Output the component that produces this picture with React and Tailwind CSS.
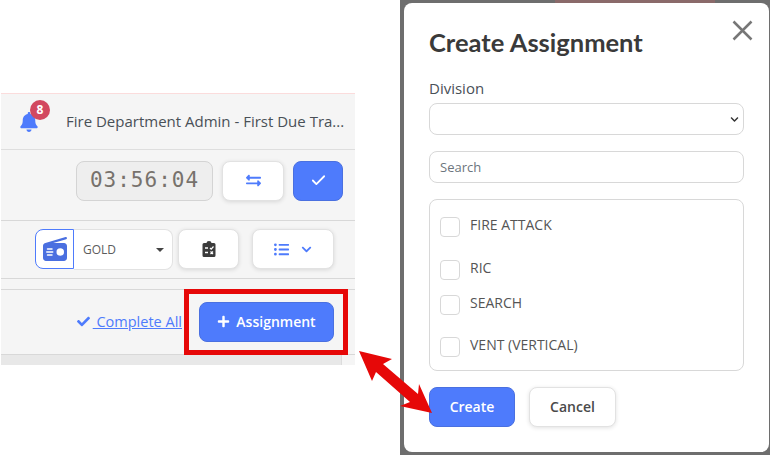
import React from 'react';
import { FaBell, FaCheck, FaChevronDown, FaExchangeAlt, FaListUl, FaPlus } from 'react-icons/fa';
import { FaRadio } from 'react-icons/fa6';
import { Check } from 'lucide-react';

const ClipboardIcon = () => (
  <svg width="14" height="16" viewBox="0 0 14 16">
    <path d="M2 2h2.5a2.5 2 0 0 1 5 0H12a1.5 1.5 0 0 1 1.5 1.5V14.500a1.500 1.500 0 0 1-1.500 1.500H2a1.500 1.500 0 0 1-1.500-1.500V3.500A1.500 1.500 0 0 1 2 2z" fill="#3b3b3b" />
    <path d="M3 7h3M3 11.500h3" stroke="#fff" strokeWidth="1.300" />
    <path d="M8 7l1.200 1.200L11.500 5.500M8.500 10.500l2.500 2.500M11 10.500l-2.500 2.500" stroke="#fff" strokeWidth="1.200" fill="none" />
  </svg>
);

const whiteBtn = 'flex items-center justify-center bg-white rounded-lg border border-[#e2e2e2] shadow-[0_1px_4px_rgba(0,0,0,0.12)]';

const assignments = [
  { name: 'FIRE ATTACK', box: 'mt-[17px]', label: '-mt-[2px]' },
  { name: 'RIC', box: 'mt-[23px]', label: '-mt-[2px]' },
  { name: 'SEARCH', box: 'mt-[15px]', label: '-mt-[2px]' },
  { name: 'VENT (VERTICAL)', box: 'mt-[22px]', label: '-mt-[2px]' },
];

export default function App() {
  return (
    <div className="relative w-[770px] h-[455px] overflow-hidden bg-white flex font-['Open_Sans',sans-serif]">
      {/* left crop of the page */}
      <div className="w-[354px] ml-px mt-[93px] h-[272px] bg-[#f5f5f5] border-t border-[#fbdcdc] flex flex-col text-[#495057]">
        <div className="h-[56px] border-b border-[#dedede] flex items-center">
          <div className="relative ml-[18px] mt-[1px] text-[#4e7bfc]">
            <FaBell size={20} />
            <span className="absolute -top-[12px] left-[11px] w-[20px] h-[20px] rounded-full bg-[#d2485f] text-white text-[12px] font-bold flex items-center justify-center">8</span>
          </div>
          <span className="ml-[27px] text-[15px] whitespace-nowrap">Fire Department Admin - First Due Tra...</span>
        </div>
        <div className="h-[71px] border-b border-[#d8d8d8] flex items-center justify-end pr-[12px] pb-[9px] gap-[9px]">
          <div className="w-[137px] h-[40px] rounded-lg bg-[#eeeeee] border border-[#d4d4d4] flex items-center justify-center text-[#77726c] text-[21px] tracking-[1px] font-['DejaVu_Sans_Mono',monospace]">03:56:04</div>
          <div className={`${whiteBtn} w-[62px] h-[40px] text-[#4e7bfc]`}><FaExchangeAlt size={15} className="-scale-x-100" /></div>
          <div className="w-[50px] h-[40px] rounded-lg bg-[#4e7bfc] border border-[#4a70e0] flex items-center justify-center text-white"><Check size={17} strokeWidth={2.5} /></div>
        </div>
        <div className="h-[58px] border-b border-[#d8d8d8] flex items-center pl-[34px] pb-[1px]">
          <div className="w-[39px] h-[40px] rounded-l-lg bg-white border border-[#4e7bfc] flex items-center justify-center text-[#4a6fe0]"><FaRadio size={24} /></div>
          <div className="w-[99px] h-[41px] rounded-r-lg bg-white border border-[#e2e2e2] border-l-0 flex items-center justify-between pl-[9px] pr-[8px] pt-[1px] text-[12px] text-[#5c5c5c]">
            GOLD
            <span className="w-0 h-0 border-x-[4px] border-x-transparent border-t-[4px] border-t-[#444]" />
          </div>
          <div className={`${whiteBtn} ml-[5px] w-[61px] h-[40px]`}><ClipboardIcon /></div>
          <div className={`${whiteBtn} ml-[13px] w-[82px] h-[40px] text-[#4e7bfc] gap-[12px]`}>
            <FaListUl size={15} />
            <FaChevronDown size={11} />
          </div>
        </div>
        <div className="h-[10px]" />
        <div className="h-[66px] border-y border-[#d8d8d8] flex items-center justify-end pr-[21px] pb-[1px]">
          <a className="flex items-center text-[14.5px] text-[#4e7bfc] underline whitespace-nowrap">
            <FaCheck size={13} className="mr-[3px]" />
            <span className="whitespace-pre"> Complete All</span>
          </a>
          <button className="ml-[17px] w-[135px] h-[40px] rounded-lg bg-[#4e7bfc] border border-[#4a70e0] flex items-center justify-center text-white text-[14px] font-semibold gap-[6px]">
            <FaPlus size={13} /> Assignment
          </button>
        </div>
        <div className="flex-1 flex">
          <div className="w-[341px] bg-[#e8e8e8] border-r border-[#dcdcdc]" />
        </div>
      </div>

      {/* dimmed modal crop */}
      <div className="relative ml-[45px] w-[370px] h-[455px] bg-[#6e6e6e] pt-[3px] pl-[4px] pr-px pb-[3px]">
        <div className="absolute top-0 left-[155px] w-[160px] h-[3px] bg-[#8a6a6a]" />
        <div className="relative h-full bg-white rounded-lg px-[25px] text-[#495057]">
          <h2 className="pt-[23px] pb-[1px] text-[25.5px] leading-[32px] font-bold text-[#3a3a3a] font-['Lato',sans-serif]">Create Assignment</h2>
          <svg className="absolute top-[17px] right-[16px]" width="21" height="21" viewBox="0 0 21 21">
            <path d="M1.500 1.500l18 18M19.500 1.500l-18 18" stroke="#777" strokeWidth="2.500" />
          </svg>
          <label className="block mt-[19px] text-[15px] leading-[20px]">Division</label>
          <div className="mt-[5px] h-[32px] w-[315px] rounded-lg border border-[#d8d8d8] flex items-center justify-end pr-[4px] text-[#333]">
            <FaChevronDown size={9} />
          </div>
          <div className="mt-[16px] h-[32px] w-[315px] rounded-lg border border-[#d8d8d8] flex items-center pl-[10px] pt-[1px] text-[13px] text-[#6c757d]">Search</div>
          <div className="mt-[16px] h-[172px] w-[315px] rounded-lg border border-[#d8d8d8] px-[10px]">
            {assignments.map(a => (
              <div key={a.name} className={`flex ${a.box}`}>
                <span className="w-[20px] h-[20px] rounded-[4px] border border-[#d8d8d8] bg-white" />
                <span className={`ml-[10px] text-[14px] leading-[20px] text-[#555] ${a.label}`}>{a.name}</span>
              </div>
            ))}
          </div>
          <div className="mt-[16px] flex gap-[14px]">
            <button className="w-[86px] h-[40px] rounded-lg bg-[#4e7bfc] border border-[#4a70e0] text-white text-[14px] font-semibold pb-[1px]">Create</button>
            <button className={`${whiteBtn} w-[87px] h-[40px] text-[14px] font-semibold text-[#4a4a4a] pb-[1px]`}>Cancel</button>
          </div>
        </div>
      </div>

      {/* red annotations */}
      <div className="absolute left-[184px] top-[289px] w-[164px] h-[66px] border-[5px] border-[#e60808]" />
      <svg className="absolute left-0 top-0 pointer-events-none" width="770" height="455">
        <polygon points="359,351 392,359 383,364 418,394 419,384 432,413 400,406 410,402 376,372 372,381" fill="#e60808" />
      </svg>
    </div>
  );
}
